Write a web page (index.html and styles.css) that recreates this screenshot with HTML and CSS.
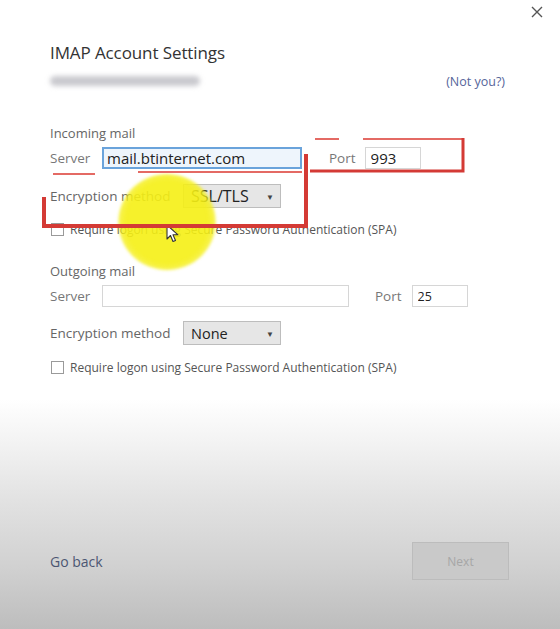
FILE: index.html
```html
<!DOCTYPE html>
<html lang="en">
<head>
  <meta charset="UTF-8" />
  <title>IMAP Account Settings</title>
  <link rel="stylesheet" href="styles.css">
</head>
<body>
  <div class="dialog">
    <div class="topbar">
      <svg class="close" width="12" height="12" viewBox="0 0 12 12"><path d="M1 1 L11 11 M11 1 L1 11" stroke="#555" stroke-width="1.4" fill="none"/></svg>
    </div>

    <h1>IMAP Account Settings</h1>
    <div class="account-row">
      <span class="email-blur"></span>
      <a class="not-you">(Not you?)</a>
    </div>

    <div class="section incoming">
      <div class="section-title">Incoming mail</div>
      <div class="row first">
        <label class="lbl-server">Server</label>
        <input class="server-in active" type="text" value="mail.btinternet.com">
        <label class="lbl-port">Port</label>
        <input class="port-in big" type="text" value="993">
      </div>
      <div class="row enc">
        <label class="lbl-enc">Encryption method</label>
        <div class="select big"><span>SSL/TLS</span><span class="arrow">&#9660;</span></div>
      </div>
      <div class="row check">
        <span class="box"></span>
        <span>Require logon using Secure Password Authentication (SPA)</span>
      </div>
    </div>

    <div class="section outgoing">
      <div class="section-title">Outgoing mail</div>
      <div class="row first">
        <label class="lbl-server">Server</label>
        <input class="server-in wide" type="text" value="">
        <label class="lbl-port">Port</label>
        <input class="port-in" type="text" value="25">
      </div>
      <div class="row enc">
        <label class="lbl-enc">Encryption method</label>
        <div class="select"><span>None</span><span class="arrow">&#9660;</span></div>
      </div>
      <div class="row check">
        <span class="box"></span>
        <span>Require logon using Secure Password Authentication (SPA)</span>
      </div>
    </div>

    <div class="footer">
      <a class="go-back">Go back</a>
      <button class="next" disabled>Next</button>
    </div>
  </div>

  <!-- video annotation layer -->
  <div class="highlight"></div>
  <svg class="cursor" width="14" height="20" viewBox="0 0 14 20"><path d="M1 1 L1 15 L4.5 11.5 L7 17.5 L9.5 16.5 L7 10.8 L12 10.8 Z" fill="#fff" stroke="#333" stroke-width="1.1" stroke-linejoin="round"/></svg>
  <svg class="marks" width="560" height="629" viewBox="0 0 560 629">
    <g stroke="#e46a64" stroke-width="2" fill="none">
      <path d="M53 174 H95"/>
      <path d="M138 172 H302"/>
      <path d="M315 139 H339"/>
      <path d="M363 139 H464"/>
    </g>
    <g stroke="#d43a35" stroke-width="3" fill="none">
      <path d="M463 138 V171 H310"/>
    </g>
    <g stroke="#d43a35" stroke-width="4" fill="none" stroke-linejoin="miter">
      <path d="M44 197 V226 H306 V154"/>
    </g>
  </svg>
</body>
</html>
```

FILE: styles.css
```css
html, body {
  margin: 0;
  height: 100%;
}
body {
  width: 560px;
  height: 629px;
  overflow: hidden;
  position: relative;
  font-family: 'Open Sans', 'Noto Sans', sans-serif;
  color: #666;
  background: linear-gradient(to bottom, #ffffff 0px, #ffffff 400px, #e2e2e2 500px, #d0d0d0 570px, #bdbdbd 629px);
}
.dialog {
  padding: 0 51px 0 50px;
  height: 629px;
  box-sizing: border-box;
  display: flex;
  flex-direction: column;
}
.topbar {
  display: flex;
  justify-content: flex-end;
  height: 36px;
  margin-right: -34px;
  padding-top: 6px;
  box-sizing: border-box;
}
h1 {
  margin: 6px 0 0;
  font-size: 17px;
  font-weight: 400;
  color: #333;
  line-height: 22px;
  letter-spacing: -0.1px;
}
.account-row {
  display: flex;
  justify-content: space-between;
  align-items: center;
  height: 22px;
  margin-top: 6px;
}
.email-blur {
  width: 150px;
  height: 10px;
  border-radius: 5px;
  background: #c9c9ce;
  filter: blur(2.5px);
}
.not-you {
  font-size: 12.5px;
  color: #56659a;
  margin-right: 4px;
}
.section-title {
  font-size: 13px;
  line-height: 18px;
}
.incoming {
  margin-top: 32px;
}
.outgoing {
  margin-top: 24px;
}
.row {
  display: flex;
  align-items: center;
  font-size: 13.5px;
}
.row.first {
  margin-top: 5px;
}
.lbl-server {
  width: 52px;
  color: #777;
}
input {
  font-family: inherit;
  box-sizing: border-box;
  height: 22px;
  border: 1px solid #d6d6d6;
  background: #fff;
  padding: 0 5px;
  color: #222;
  outline: none;
}
.server-in {
  width: 200px;
  font-size: 15px;
}
.server-in.active {
  border: 2px solid #6aa3db;
  background: #eef5fc;
  padding-left: 3px;
}
.server-in.wide {
  width: 247px;
}
.lbl-port {
  margin-left: 27px;
  margin-right: 9px;
  color: #777;
}
.outgoing .lbl-port {
  margin-left: 26px;
  margin-right: 10px;
}
.port-in {
  width: 56px;
  font-size: 12.5px;
}
.port-in.big {
  font-size: 15px;
}
.enc {
  margin-top: 14px;
}
.incoming .enc {
  margin-top: 15px;
}
.lbl-enc {
  width: 133px;
}
.select {
  box-sizing: border-box;
  width: 98px;
  height: 24px;
  border: 1px solid #bdbdbd;
  background: #e6e6e6;
  color: #222;
  font-size: 14.5px;
  display: flex;
  align-items: center;
  justify-content: space-between;
  padding: 0 6px 0 7px;
}
.select.big {
  font-size: 16px;
}
.arrow {
  font-size: 8px;
  color: #444;
}
.check {
  margin-top: 13px;
  font-size: 12px;
  color: #555;
  gap: 6px;
}
.outgoing .check {
  margin-top: 14px;
}
.box {
  width: 11px;
  height: 11px;
  border: 1px solid #9a9a9a;
  background: #fff;
  margin-left: 1px;
}
.footer {
  margin-top: auto;
  margin-bottom: 49px;
  display: flex;
  justify-content: space-between;
  align-items: center;
}
.go-back {
  font-size: 14px;
  color: #4c5672;
}
.next {
  width: 97px;
  height: 38px;
  border: 1px solid #bcbcbc;
  background: #c9c9c9;
  color: #a6a6a6;
  font-family: inherit;
  font-size: 12px;
}

/* annotation layer from the video */
.highlight {
  position: absolute;
  left: 118px;
  top: 174px;
  width: 98px;
  height: 96px;
  border-radius: 50%;
  background: radial-gradient(circle, rgba(245, 239, 20, 0.9) 60%, rgba(245, 239, 20, 0.75) 70%, rgba(245, 239, 20, 0) 72%);
  filter: blur(1.5px);
}
.cursor {
  position: absolute;
  left: 166px;
  top: 224px;
}
.marks {
  position: absolute;
  left: 0;
  top: 0;
  pointer-events: none;
}
```
